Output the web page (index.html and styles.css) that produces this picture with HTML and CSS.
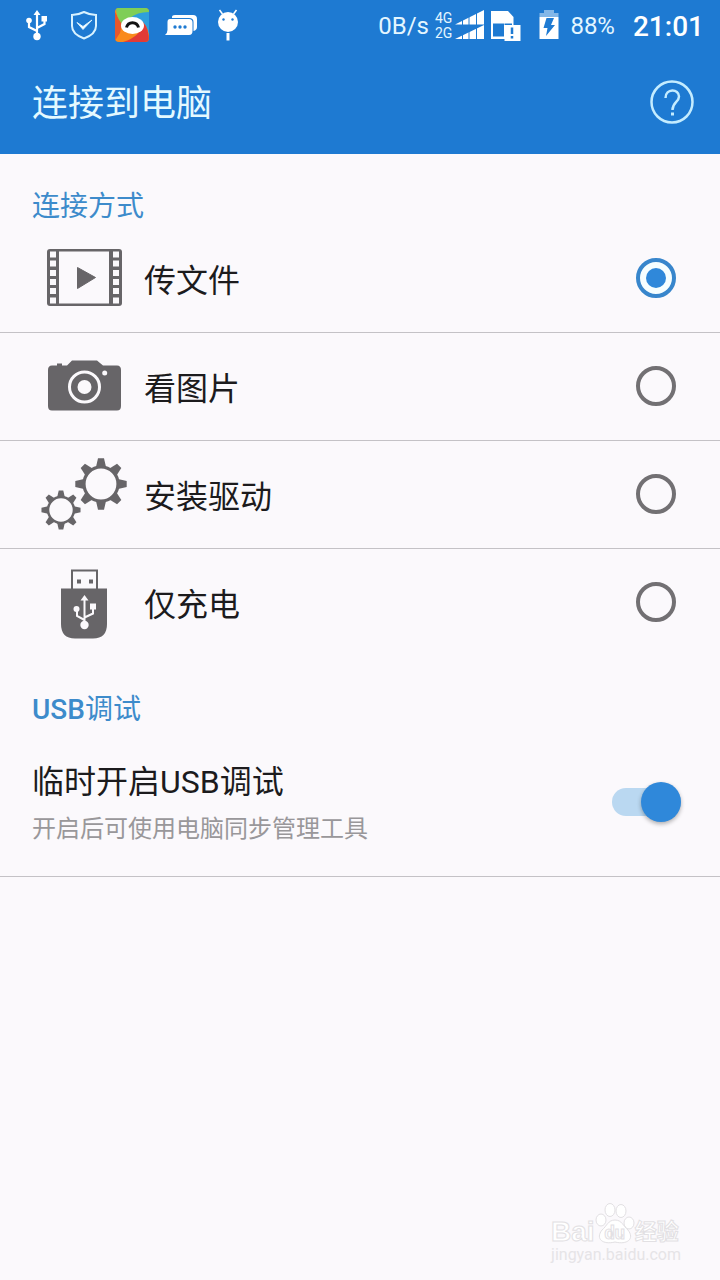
FILE: index.html
```html
<!DOCTYPE html>
<html lang="zh-CN">
<head>
<meta charset="utf-8">
<meta name="viewport" content="width=device-width, initial-scale=1">
<title>连接到电脑</title>
<link rel="stylesheet" href="styles.css">
</head>
<body>
<div class="status-bar">
  <div class="status-left">
    <svg width="30" height="34" viewBox="0 0 30 34" fill="none" stroke="#fff" stroke-width="2.200">
      <path d="M15 6V28M15 23L7 19V14M15 20L22.500 16V11"/>
      <g fill="#fff" stroke="none"><path d="M15 2l3.500 5h-7zM19.500 8h5.500v5.500h-5.500z"/><circle cx="7" cy="12.500" r="2.800"/><circle cx="15" cy="28.500" r="3.700"/></g>
    </svg>
    <svg width="31" height="34" viewBox="0 0 31 34" fill="none" stroke="#d8f2ff" stroke-width="2">
      <path d="M16 4Q22 7 28 7V18Q28 26 16 30.500Q4 26 4 18V7Q10 7 16 4Z"/>
      <path d="M9 14.500l6 4 9-6.500-9 9.500z" fill="#fff" stroke-width="1"/>
    </svg>
    <svg width="34" height="34" viewBox="0 0 34 34">
      <clipPath id="tile"><rect width="34" height="34" rx="4"/></clipPath>
      <g clip-path="url(#tile)">
        <rect width="34" height="34" fill="#f98a1c"/>
        <path d="M0 4L7 16L5 25Q0 32 0 34Z" fill="#e8572b"/>
        <path d="M1 0H34V5Q22 5 16 11L7 16Q1 9 1 0Z" fill="#7fce57"/>
        <path d="M34 4V27Q32 16 25 12L15 10Q22 4 34 4Z" fill="#2e9fdd"/>
        <path d="M8 34Q27 28 28 14Q34 20 34 34Z" fill="#e23b36"/>
      </g>
      <ellipse cx="17.500" cy="17.500" rx="11.500" ry="8.500" fill="#fff"/>
      <path d="M11.500 19.500C13 13 22 13 23.500 19.500" fill="none" stroke="#111" stroke-width="3"/>
    </svg>
    <svg width="33" height="34" viewBox="0 0 33 34">
      <path d="M7 10V9Q7 7 10 7H28Q32 7 32 11V19Q32 22 28.500 23V14Q28.500 10 24 10Z" fill="#fff"/>
      <path d="M5 11H24Q27.500 11 27.500 14.500V23Q27.500 27 24 27H0Q2.500 25 2.500 22V14Q2.500 11 5 11Z" fill="#fff"/>
      <g fill="#1e7ad2"><circle cx="10" cy="19" r="1.700"/><circle cx="15" cy="19" r="1.700"/><circle cx="20" cy="19" r="1.700"/></g>
    </svg>
    <svg width="28" height="34" viewBox="0 0 28 34">
      <circle cx="14" cy="14" r="10" fill="#fff"/>
      <path d="M8.500 6L5.500 2M19.500 6L22.500 2" stroke="#fff" stroke-width="1.500"/>
      <path d="M14 25v7.500" stroke="#fff" stroke-width="3"/>
      <circle cx="9.500" cy="11.500" r="1.200" fill="#1e7ad2"/><circle cx="18.500" cy="11.500" r="1.200" fill="#1e7ad2"/>
    </svg>
  </div>
  <div class="status-right">
    <span>0B/s</span>
    <span class="network"><span>4G</span><span>2G</span></span>
    <svg class="signal" width="29" height="30" viewBox="0 0 29 30">
      <path d="M0 14.500L29 0V14.500ZM0 29L29 15V29Z" fill="#fff"/>
      <path d="M7.500 0v30M14 0v30M21.500 0v30" stroke="#1e7ad2"/>
    </svg>
    <svg class="sim" width="30" height="32" viewBox="0 0 30 32">
      <path d="M0 2H17L22.500 8V30H0Z" fill="#fff"/>
      <path d="M2 14.500H13V27.500H2Z" fill="#1e7ad2"/>
      <path d="M13.500 14.500H21V16H13.500Z" fill="#1e7ad2"/>
      <path d="M13.500 16H29.500V32H13.500Z" fill="#fff"/>
      <path d="M21 18.500V25M21 27V29.500" stroke="#1e7ad2" stroke-width="2.500"/>
    </svg>
    <svg class="battery" width="20" height="30" viewBox="0 0 20 30">
      <path d="M5 0H15V3H19.500V7H.5V3H5Z" fill="#83b7e8"/>
      <path d="M.5 7H19.500V29H.5Z" fill="#fff"/>
      <path d="M7.500 8H15L12 15H16L7 26L8.500 18H4.500Z" fill="#1e7ad2"/>
    </svg>
    <span>88%</span>
    <time class="clock">21:01</time>
  </div>
</div>

<header class="app-bar">
  <h1>连接到电脑</h1>
  <button class="help" type="button" aria-label="帮助">
    <svg width="44" height="44" viewBox="0 0 44 44" fill="none" stroke="#c4ecff">
      <circle cx="22" cy="22" r="20.500" stroke-width="2.500"/>
      <path d="M15.500 18C15.500 8 29 8.500 29 16.500C29 22 22.500 22 22.500 30" stroke-width="2.500"/>
      <path d="M22.500 32.500V35.500" stroke-width="3"/>
    </svg>
  </button>
</header>

<main>
  <section>
    <h2 id="mode">连接方式</h2>
    <div role="radiogroup" aria-labelledby="mode">
      <label class="option">
        <svg class="icon" viewBox="0 -1 88 74">
          <rect x="7" y="7" width="75" height="57" rx="3"/>
          <g class="paper">
            <path d="M19 9.500H69V61.500H19Z"/>
            <path id="holes" d="M10 9.500h6v6h-6zM10 18.500h6v6h-6zM10 28h6v6h-6zM10 37h6v6h-6zM10 46h6v6h-6zM10 55.500h6v6h-6z"/>
            <use href="#holes" x="63"/>
          </g>
          <path d="M37.500 25.500L55.500 35.500L37.500 46.500Z" stroke="#676568" stroke-linejoin="round"/>
        </svg>
        <span class="name">传文件</span>
        <input class="radio" type="radio" name="mode" checked>
      </label>
      <label class="option">
        <svg class="icon" viewBox="0 -1 88 74">
          <path d="M12 15.500H17V13.500H22V15.500H27L32 10.500H57L63 15.500H77Q81 15.500 81 20V56Q81 60.500 77 60.500H12Q8 60.500 8 56V20Q8 15.500 12 15.500Z"/>
          <circle cx="44.500" cy="37" r="15" stroke="#fbf9fc" stroke-width="3"/>
          <circle class="paper" cx="44.500" cy="37" r="7"/>
          <circle class="paper" cx="64.700" cy="23" r="2.500"/>
        </svg>
        <span class="name">看图片</span>
        <input class="radio" type="radio" name="mode">
      </label>
      <label class="option">
        <svg class="icon" viewBox="0 -1 88 74">
          <defs>
            <path id="tooth" d="M-5-17L-3-25.700H3L5-17Z"/>
            <g id="gear">
              <circle r="17" fill="none" stroke="#676568" stroke-width="3.200"/>
              <use href="#tooth"/><use href="#tooth" transform="rotate(45)"/><use href="#tooth" transform="rotate(90)"/><use href="#tooth" transform="rotate(135)"/>
              <use href="#tooth" transform="rotate(180)"/><use href="#tooth" transform="rotate(225)"/><use href="#tooth" transform="rotate(270)"/><use href="#tooth" transform="rotate(315)"/>
            </g>
          </defs>
          <use href="#gear" transform="translate(61 26)"/>
          <use href="#gear" transform="translate(21 52) scale(.76)"/>
        </svg>
        <span class="name">安装驱动</span>
        <input class="radio" type="radio" name="mode">
      </label>
      <label class="option">
        <svg class="icon" viewBox="0 -1 88 74">
          <path d="M32 23V4.500H57V23" fill="none" stroke="#676568" stroke-width="2"/>
          <path d="M37 13.500h4v4h-4zM49 13.500h4v4h-4z"/>
          <path d="M21 22.500H67V58Q67 72.500 53 72.500H35Q21 72.500 21 58Z"/>
          <g class="paper"><path d="M44.500 29l4 5.500h-8zM50 37.500h6v6h-6z"/><circle cx="36.500" cy="43" r="3"/><circle cx="44.500" cy="59" r="4.200"/></g>
          <path d="M44.500 33V58M44.500 54L37 50V43M44.500 51.500L53 47.500V42" fill="none" stroke="#fbf9fc" stroke-width="2"/>
        </svg>
        <span class="name">仅充电</span>
        <input class="radio" type="radio" name="mode">
      </label>
    </div>
  </section>

  <section>
    <h2><span class="latin">USB</span>调试</h2>
    <label class="setting">
      <span class="setting-text">
        <span class="setting-title">临时开启USB调试</span>
        <span class="setting-note">开启后可使用电脑同步管理工具</span>
      </span>
      <input class="switch" type="checkbox" role="switch" checked>
    </label>
  </section>
</main>

<div class="watermark">
  <div class="brand">
    <span class="brand-latin">Bai</span>
    <span class="paw">
      <svg width="40" height="44" viewBox="0 0 40 44" fill="#fff" stroke="#e2e0e3">
        <ellipse cx="6" cy="18" rx="5" ry="6"/><ellipse cx="15" cy="8" rx="5" ry="6.500"/>
        <ellipse cx="26" cy="9" rx="5" ry="6.500"/><ellipse cx="34" cy="21" rx="5" ry="6"/>
        <path d="M20 18C27 18 28 24 33 28C40 37 32 43 20 40C8 43 0 37 7 28C12 24 13 18 20 18Z"/>
      </svg>
      <span class="paw-text">du</span>
    </span>
    <span class="brand-han">经验</span>
  </div>
  <div class="site">jingyan.baidu.com</div>
</div>
</body>
</html>
```
FILE: styles.css
```css
* {
  box-sizing: border-box;
}

body {
  position: relative;
  min-height: 100vh;
  margin: 0;
  background: #fbf9fc;
  color: #1c1b1d;
  font-family: Roboto, "Noto Sans CJK SC", sans-serif;
}

h1,
h2 {
  margin: 0;
  font-weight: 400;
}

svg {
  display: block;
  flex: none;
}

.status-bar {
  display: flex;
  justify-content: space-between;
  height: 50px;
  padding: 0 16px 0 22px;
  background: #1e7ad2;
  color: #e4f6ff;
}

.status-left,
.status-right {
  display: flex;
  align-items: center;
}

.status-left {
  gap: 16px;
}

.status-right {
  padding-top: 2px;
  font-size: 24px;
  line-height: 48px;
}

.network {
  display: flex;
  flex-direction: column;
  margin: 0 3px 0 6px;
  font-size: 14px;
  line-height: 15px;
}

.signal {
  margin-bottom: 2px;
}

.sim {
  margin: 0 18px 2px 7px;
}

.battery {
  margin: 0 11px 2px 0;
}

.clock {
  margin-left: 18px;
  padding-top: 2px;
  color: #fff;
  font-size: 28px;
  font-weight: 500;
}

.app-bar {
  display: flex;
  align-items: center;
  justify-content: space-between;
  height: 104px;
  padding: 0 26px 0 32px;
  background: #1e7ad2;
  color: #e4f9ff;
}

.app-bar h1 {
  padding-top: 3px;
  font-size: 36px;
  line-height: 52px;
}

.help {
  padding: 0;
  border: 0;
  background: none;
}

h2 {
  padding: 35px 32px 0;
  color: #3d8bcb;
  font-size: 28px;
  line-height: 36px;
}

.latin {
  font-weight: 500;
}

.option {
  display: flex;
  align-items: center;
  gap: 16px;
  height: 108px;
  padding: 0 44px 2px 40px;
  border-bottom: 1px solid #c4c2c6;
}

.option:last-child {
  border-bottom-color: transparent;
}

.icon {
  width: 88px;
  height: 74px;
  fill: #676568;
}

.paper {
  fill: #fbf9fc;
}

.name {
  flex: 1;
  padding-top: 6px;
  font-size: 32px;
  line-height: 48px;
}

.radio {
  display: grid;
  place-items: center;
  appearance: none;
  width: 40px;
  height: 40px;
  margin: 0;
  border: 4px solid #727073;
  border-radius: 50%;
}

.radio:checked {
  border-color: #3886cc;
  background: #f6feff;
}

.radio:checked::before {
  content: "";
  width: 20px;
  height: 20px;
  border-radius: 50%;
  background: #2f88da;
}

.setting {
  display: flex;
  align-items: center;
  justify-content: space-between;
  height: 149px;
  padding: 0 39px 0 32px;
  border-bottom: 1px solid #c4c2c6;
}

.setting-text {
  display: flex;
  flex-direction: column;
  padding-top: 3px;
}

.setting-title {
  font-size: 32px;
  line-height: 50px;
}

.setting-note {
  color: #99979a;
  font-size: 24px;
  line-height: 44px;
}

.switch {
  appearance: none;
  width: 69px;
  height: 28px;
  margin: 0;
  border-radius: 14px;
  background: #bad8f1;
}

.switch::before {
  content: "";
  display: block;
  width: 40px;
  height: 40px;
  margin: -6px 0 0 29px;
  border-radius: 50%;
  background: #2f88da;
  box-shadow: 0 2px 4px rgba(0, 0, 0, 0.3);
}

.watermark {
  position: absolute;
  right: 39px;
  bottom: 16px;
  color: #fff;
  -webkit-text-stroke: 1px #e2e0e3;
}

.brand {
  display: flex;
  align-items: flex-end;
  font-weight: 700;
}

.brand-latin {
  font-family: "Liberation Sans", sans-serif;
  font-size: 28px;
  line-height: 28px;
}

.brand-han {
  font-size: 22px;
  line-height: 28px;
}

.paw {
  display: grid;
  place-items: center;
}

.paw > * {
  grid-area: 1 / 1;
}

.paw-text {
  padding-top: 18px;
  font-size: 18px;
  line-height: 20px;
}

.site {
  color: #e6e4e7;
  font-size: 16px;
  line-height: 18px;
  -webkit-text-stroke: 0;
}
```
